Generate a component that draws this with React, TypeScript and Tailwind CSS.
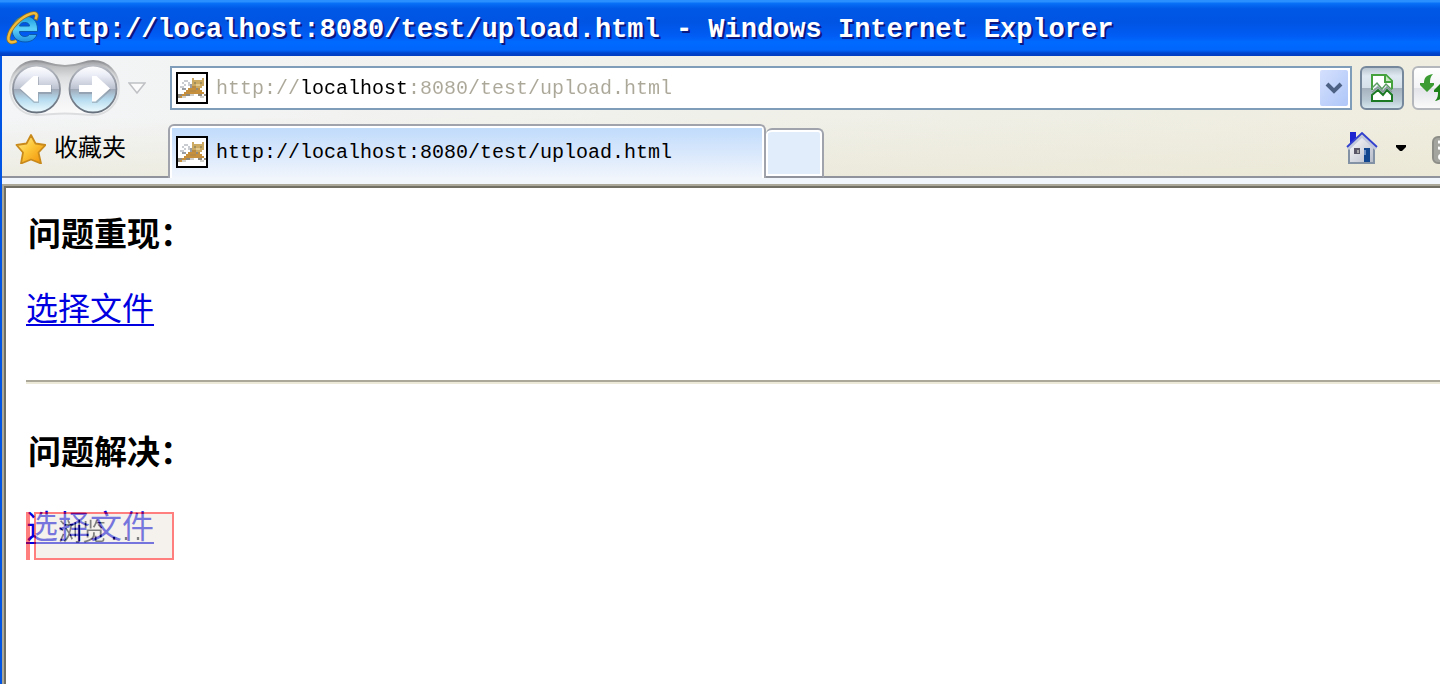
import React from "react";

const PAGE_URL = "http://localhost:8080/test/upload.html";

function ExplorerLogo() {
  return (
    <svg viewBox="6 11 34 34" className="size-[34px] shrink-0" aria-hidden="true">
      <defs>
        <linearGradient id="ie" x1="0" y1="0" x2="0" y2="1">
          <stop offset="0" stopColor="#1597dd" />
          <stop offset="0.5" stopColor="#5cd0fa" />
          <stop offset="1" stopColor="#1d8fe0" />
        </linearGradient>
      </defs>
      <path
        d="M37.500 31.500H19.500c0 3 2 5 5.500 5 2 0 3.500-.8 4.500-2H37c-2 5-6 7.500-12 7.500-8 0-13-5-13-12.500S17 16 25 16s12.500 5.500 12.500 13zM19.500 26h10c-.3-2.500-2-3.500-4.700-3.500s-4.800 1-5.300 3.500z"
        fill="url(#ie)"
        stroke="#0b58ae"
        strokeWidth="1"
        fillRule="evenodd"
      />
      <path
        d="M35.500 20c3-6 .5-8-5-6.200C20.500 17 10 28 8.500 37c-.8 5 3 6.500 8 4"
        fill="none"
        stroke="#8a7230"
        strokeWidth="4"
      />
      <path
        d="M35.500 19c2.500-5 .5-7-5-5.200C20.500 17 10 28 8.500 37c-.8 5 3 6.500 8 4"
        fill="none"
        stroke="#f3bd3c"
        strokeWidth="2.400"
      />
    </svg>
  );
}

function TomcatIcon() {
  return (
    <svg viewBox="0 0 32 32" className="size-8 shrink-0" shapeRendering="crispEdges" aria-hidden="true">
      <rect x="1" y="1" width="30" height="30" fill="#fff" stroke="#000" strokeWidth="2" />
      <path d="M8 8h4v2H8zM6 10h2v2H6zM12 10h2v4h-2zM4 14h4v2H4zM8 12h2v2H8z" fill="#c9ccd0" />
      <path d="M6 16h4v2H6zM14 12h2v4h-2z" fill="#9a9da2" />
      <path d="M16 6h2v2h8V6h2v8h-2v2h-6v-2h-4z" fill="#cdaa62" />
      <path d="M18 10h2v2h-2zM24 10h2v2h-2z" fill="#a08d5c" />
      <path d="M20 12h4v2h-4z" fill="#e2c88c" />
      <path d="M12 16h12v2h2v2h2v2h-4v2h-2v-2h-8v2H8v2H4v-2h2v-2h2v-2h2v-2h2z" fill="#c58f3c" />
      <path d="M16 14h4v2h-4zM14 18h6v2h-6z" fill="#b98a42" />
      <path d="M2 22h4v2H2zM2 24h2v2H2zM10 22h4v2h-4zM22 22h4v2h-4zM28 22h2v2h-2zM20 16h2v2h-2z" fill="#8f8a80" />
      <path d="M6 24h4v2H6zM14 22h4v2h-4zM24 24h4v2h-4z" fill="#d3d1cc" />
    </svg>
  );
}

function BackForward() {
  return (
    <div className="relative h-[58px] w-28 shrink-0">
      <svg viewBox="8 59 112 58" className="block h-[58px] w-28" aria-hidden="true">
        <defs>
          <linearGradient id="well" x1="0" y1="0" x2="0" y2="1">
            <stop offset="0" stopColor="#9c9ea2" />
            <stop offset="0.1" stopColor="#bcbec0" />
            <stop offset="0.3" stopColor="#dddedf" />
            <stop offset="0.6" stopColor="#eff0f1" />
            <stop offset="1" stopColor="#fbfbfc" />
          </linearGradient>
          <linearGradient id="rim" x1="0" y1="0" x2="0" y2="1">
            <stop offset="0" stopColor="#8f9194" />
            <stop offset="0.25" stopColor="#c6c8ca" />
            <stop offset="0.5" stopColor="#e0e1e3" />
            <stop offset="1" stopColor="#dcdddf" />
          </linearGradient>
          <linearGradient id="ball" x1="0" y1="0" x2="0" y2="1">
            <stop offset="0" stopColor="#ffffff" />
            <stop offset="0.2" stopColor="#eceef7" />
            <stop offset="0.49" stopColor="#bdc3d1" />
            <stop offset="0.5" stopColor="#9fa8b6" />
            <stop offset="0.72" stopColor="#b5dbef" />
            <stop offset="1" stopColor="#effcff" />
          </linearGradient>
          <linearGradient id="ring" x1="0" y1="0" x2="0" y2="1">
            <stop offset="0" stopColor="#b8bbc2" />
            <stop offset="0.5" stopColor="#888e99" />
            <stop offset="1" stopColor="#66717d" />
          </linearGradient>
        </defs>
        <path
          d="M36 61c11 0 14 5 29 5s18-5 28-5c15 0 26 12 26 27s-11 27-26 27c-10 0-15-1.500-28-1.500s-18 1.500-29 1.500c-15 0-26-12-26-27s11-27 26-27z"
          fill="url(#well)"
          stroke="url(#rim)"
          strokeWidth="2"
        />
        <circle cx="36.500" cy="89" r="23.500" fill="url(#ball)" stroke="url(#ring)" strokeWidth="1.800" />
        <circle cx="93" cy="89" r="23.500" fill="url(#ball)" stroke="url(#ring)" strokeWidth="1.800" />
        <path d="M20 90l14-13h5v8h13v9H39v9h-5z" fill="#7f8795" opacity=".45" />
        <path d="M20 88.500L33.500 76H38v9h13v7H38v9.500h-3.500z" fill="#fff" />
        <path d="M111 90L97 103h-5v-9H79v-9h13v-8z" fill="#7f8795" opacity=".45" />
        <path d="M110 88.500L96.500 76H92v9H79v7h13v9.500h3.500z" fill="#fff" />
      </svg>
      <button type="button" aria-label="后退" className="absolute top-1 left-1 size-12 rounded-full" />
      <button type="button" aria-label="前进" className="absolute top-1 right-1 size-12 rounded-full" />
    </div>
  );
}

function StarIcon() {
  return (
    <svg viewBox="14 132 32 32" className="size-8 shrink-0" aria-hidden="true">
      <defs>
        <linearGradient id="star" x1="0" y1="0" x2="1" y2="1">
          <stop offset="0" stopColor="#fff0a0" />
          <stop offset="0.45" stopColor="#fdc83a" />
          <stop offset="1" stopColor="#f08a00" />
        </linearGradient>
      </defs>
      <path
        d="M31 135l4.500 8.500 10 1.500-7 7.500 2.500 11-10-4-10 4 2-11-6.500-7.500 10-1.500z"
        fill="url(#star)"
        stroke="#c98a1c"
        strokeWidth="1.800"
        strokeLinejoin="round"
      />
    </svg>
  );
}

function CompatIcon() {
  return (
    <svg viewBox="1371 73 24 30" className="h-[30px] w-6" aria-hidden="true">
      <path d="M1373 91V75h14l6 6v10l-5-6-4 5-5-6z" fill="#fff" />
      <path d="M1373 90V75h14l6 6v8" fill="none" stroke="#45a23c" strokeWidth="2" />
      <path d="M1386 75v7h7" fill="#c8e8c2" stroke="#45a23c" strokeWidth="2" />
      <path d="M1373 88l5-5 5 6 4-5 6 6" fill="none" stroke="#5c9d63" strokeWidth="1.500" />
      <path d="M1373 95l6-5 5 5 4-5 5 5v6h-20z" fill="#fff" stroke="#1c7a25" strokeWidth="2" />
      <path d="M1373 92l6-5 5 5 4-5 5 5" fill="none" stroke="#879a96" strokeWidth="1.500" />
    </svg>
  );
}

function RefreshIcon() {
  return (
    <svg viewBox="1418 73 32 30" className="h-[30px] w-8" aria-hidden="true">
      <path d="M1433 74c-7 1-9 4-9 9h-4v2l7 7 7-7v-2h-4c0-3 0-6 3-9z" fill="#3c9c33" />
      <path d="M1435 101c6-1 8-4 8-9h3v-2l-6-6-6 6v2h4c0 3 0 6-3 9z" fill="#1f8219" />
    </svg>
  );
}

function HomeIcon() {
  return (
    <svg viewBox="1346 132 32 32" className="size-8" aria-hidden="true">
      <defs>
        <linearGradient id="wall" x1="0" y1="0" x2="1" y2="1">
          <stop offset="0" stopColor="#ffffff" />
          <stop offset="1" stopColor="#b5bac8" />
        </linearGradient>
      </defs>
      <path d="M1350 132h6v6l-6 6z" fill="#1c25cf" />
      <path d="M1349 163v-16l13-12 12 12v16z" fill="url(#wall)" stroke="#8492a6" strokeWidth="2" />
      <path d="M1348 149l14-13 14 13" fill="none" stroke="#c3c9dc" strokeWidth="3" />
      <path d="M1347 147l15-14 15 14" fill="none" stroke="#3341cf" strokeWidth="1.800" />
      <path d="M1354 148h6v6h-6z" fill="#5a5868" />
      <path d="M1357 150h2v3h-2z" fill="#aaa" />
      <path d="M1364 148h6v14h-6z" fill="#12478f" />
      <path d="M1364 150h2v5h-2z" fill="#6b8fc4" />
    </svg>
  );
}

function TitleBar() {
  return (
    <header className="flex h-14 items-center gap-1 overflow-hidden bg-[linear-gradient(180deg,#2a8fff_0,#2a8fff_2px,#0872f8_3px,#0058e6_9px,#0054e3_22px,#005cf4_36px,#006aff_42px,#0066fc_50px,#0046cf_53px,#003cc0_56px)] pl-1.5">
      <ExplorerLogo />
      <h1 className="pt-1 font-['Liberation_Mono',monospace] text-[27px] leading-8 font-bold whitespace-nowrap text-white [text-shadow:2px_2px_0_#0a1883]">
        {PAGE_URL} - Windows Internet Explorer
      </h1>
    </header>
  );
}

function AddressRow() {
  return (
    <div className="flex h-16 items-center pl-1.5">
      <BackForward />
      <button type="button" aria-label="最近的页面" className="ml-2 shrink-0">
        <svg viewBox="0 0 18 12" className="h-3 w-[18px]" aria-hidden="true">
          <path d="M1 1h16L9 11z" fill="#fbfbfb" stroke="#bfc1c4" strokeWidth="1.500" />
        </svg>
      </button>
      <form
        onSubmit={(e) => e.preventDefault()}
        className="ml-6 flex h-11 min-w-0 flex-1 items-center border-2 border-[#7f9db9] bg-white pr-0.5 pl-1"
      >
        <TomcatIcon />
        <input
          aria-label="地址"
          defaultValue={PAGE_URL}
          spellCheck={false}
          className="ml-2 h-8 min-w-0 flex-1 bg-[linear-gradient(90deg,#aca899_84px,#000_84px,#000_192px,#aca899_192px)] bg-clip-text font-['Liberation_Mono',monospace] text-[20px] text-transparent outline-none"
        />
        <button
          type="button"
          aria-label="显示地址列表"
          className="flex h-9 w-7 shrink-0 items-center justify-center rounded-xs bg-linear-to-br from-[#d5e0fd] to-[#aec6f8]"
        >
          <svg viewBox="0 0 18 12" className="h-3 w-[18px]" aria-hidden="true">
            <path d="M2 2l7 7 7-7" fill="none" stroke="#4d6185" strokeWidth="4" />
          </svg>
        </button>
      </form>
      <button
        type="button"
        aria-label="兼容性视图"
        className="ml-2 flex size-11 shrink-0 items-center justify-center rounded-md border-2 border-[#76889b] bg-[linear-gradient(180deg,#b9c5d0_0,#dfe9f1_20%,#d5e0e9_49%,#a5b2bd_50%,#b9c9d4_80%,#d6e6ee_100%)]"
      >
        <CompatIcon />
      </button>
      <button
        type="button"
        aria-label="刷新"
        className="-mr-4 ml-2 flex size-11 shrink-0 items-center justify-center rounded-md border-2 border-[#b4b7bb] bg-[linear-gradient(180deg,#ffffff_0,#f4f4f6_49%,#e2e3e8_50%,#fafafa_100%)]"
      >
        <RefreshIcon />
      </button>
    </div>
  );
}

function TabRow() {
  return (
    <div className="flex h-[58px] items-end">
      <div className="flex h-[58px] w-[166px] shrink-0 items-center border-b-2 border-[#90939c] pl-3">
        <button
          type="button"
          className="flex items-center gap-2 font-['Noto_Sans_CJK_SC',sans-serif] text-[24px] leading-8 text-black"
        >
          <StarIcon />
          <span className="pb-1">收藏夹</span>
        </button>
      </div>
      <div className="h-[54px] w-[598px] shrink-0 rounded-t-md border-2 border-b-0 border-[#a0a3ab] bg-white px-0.5 pt-0.5">
        <button
          type="button"
          aria-current="page"
          className="flex h-full w-full items-center gap-2 bg-linear-to-b from-[#c0dbfb] to-[#f1f5fc] pb-0.5 pl-1 font-['Liberation_Mono',monospace] text-[20px] text-black"
        >
          <TomcatIcon />
          <span className="pt-0.5">{PAGE_URL}</span>
        </button>
      </div>
      <button
        type="button"
        aria-label="新选项卡"
        className="h-[50px] w-[58px] shrink-0 rounded-t-md border-2 border-l-0 border-[#a0a3ab] border-b-[#90939c] bg-[#e1edfa] shadow-[inset_0_0_0_2px_#ffffff]"
      />
      <div className="flex h-[58px] min-w-0 flex-1 items-center justify-end overflow-hidden border-b-2 border-[#90939c]">
        <button type="button" aria-label="主页" className="shrink-0">
          <HomeIcon />
        </button>
        <button type="button" aria-label="主页选项" className="ml-4 shrink-0">
          <svg viewBox="0 0 14 8" className="h-2 w-3.5" aria-hidden="true">
            <path d="M2 1h10v2l-4 4H6L2 3z" />
          </svg>
        </button>
        <button type="button" aria-label="源" className="-mr-6 ml-6 shrink-0">
          <svg viewBox="0 0 32 32" className="size-8" aria-hidden="true">
            <rect x="1" y="5" width="28" height="26" rx="5" fill="#a5a59f" stroke="#8e8e88" strokeWidth="2" />
            <circle cx="9" cy="25" r="3" fill="#fff" />
            <path d="M6 16c6 0 11 5 11 11M6 10c10 0 17 7 17 17" fill="none" stroke="#fff" strokeWidth="3" />
          </svg>
        </button>
      </div>
    </div>
  );
}

const headingClass = "pl-0.5 text-[33px] leading-10 font-bold text-black";
const linkClass = "text-[32px] leading-10 text-[#0000e0] underline decoration-2 underline-offset-4";

export default function App() {
  return (
    <div className="flex min-h-screen flex-col overflow-hidden bg-white">
      <TitleBar />
      <div className="flex flex-1 flex-col border-l-2 border-[#0054e3]">
        <div className="bg-[linear-gradient(180deg,transparent_50%,rgba(233,229,208,0.55)_100%),linear-gradient(90deg,#f3f5f7_0%,#f0f0ea_50%,#efeddf_100%)]">
          <AddressRow />
          <TabRow />
        </div>
        <div className="h-1.5 bg-[#f1f5fc]" />
        <div className="flex flex-1 flex-col border-t-2 border-l-2 border-[#aca899]">
          <main className="flex-1 border-t-2 border-l-2 border-[#716f64] bg-white pt-6 pl-5 font-['Noto_Sans_CJK_SC',sans-serif]">
            <h4 className={headingClass}>问题重现：</h4>
            <div className="mt-[34px] flex">
              <a href="#choose" className={linkClass}>
                选择文件
              </a>
            </div>
            <hr className="mt-[54px] h-1 border-t-2 border-b-2 border-t-[#aca899] border-b-[#ece9d8]" />
            <h4 className={`${headingClass} mt-[46px]`}>问题解决：</h4>
            <div className="relative mt-[34px] flex">
              <a href="#choose" className={linkClass}>
                选择文件
              </a>
              <div className="absolute top-2 left-0 flex h-12 gap-1 opacity-50">
                <input aria-label="文件路径" readOnly className="w-1 border-2 border-[#ff0000] bg-white" />
                <button
                  type="button"
                  className="flex w-[140px] items-baseline border-2 border-[#ff0000] bg-[#ece7dc] pl-[22px] text-[24px] leading-8 text-black"
                >
                  浏览<span className="pl-0.5 font-['Liberation_Mono',monospace] text-[20px]">...</span>
                </button>
              </div>
            </div>
          </main>
        </div>
      </div>
    </div>
  );
}
